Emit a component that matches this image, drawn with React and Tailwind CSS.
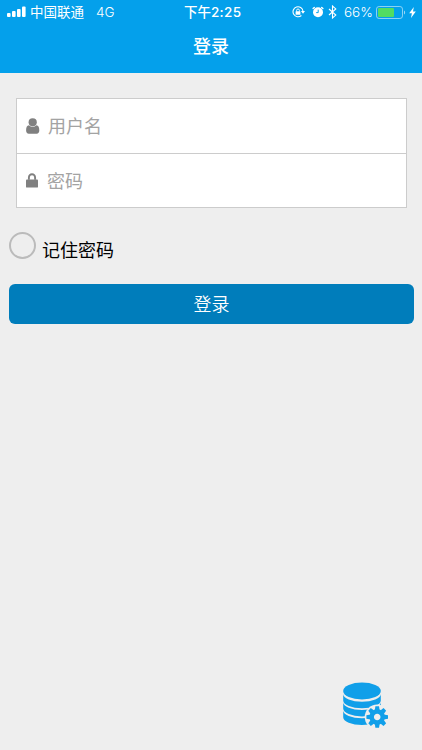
import React, { useState } from 'react';

const toothAngles = [0, 45, 90, 135, 180, 225, 270, 315];

const SignalIcon = () => (
  <svg width="19" height="12" viewBox="0 0 19 12" fill="currentColor">
    <rect x="0" y="7" width="3.6" height="4" rx="1" />
    <rect x="5" y="5" width="3.6" height="6" rx="1" />
    <rect x="10" y="3" width="3.6" height="8" rx="1" />
    <rect x="15" y="0.5" width="3.6" height="10.5" rx="1" />
  </svg>
);

const RotationLockIcon = () => (
  <svg width="13" height="12" viewBox="0 0 13 12" fill="none" stroke="currentColor">
    <path d="M9.4 9.5A5 5 0 1 1 11 5.2" strokeWidth="1.1" />
    <path d="M8.9 5h4.1L11 7.8z" fill="currentColor" stroke="none" />
    <rect x="3.6" y="5.3" width="4.8" height="3.5" rx="0.4" fill="currentColor" stroke="none" />
    <path d="M4.6 5.6V4.4a1.4 1.4 0 0 1 2.8 0v1.2" strokeWidth="0.9" />
  </svg>
);

const AlarmIcon = () => (
  <svg width="12" height="12" viewBox="0 0 12 12" fill="none" stroke="currentColor">
    <circle cx="6" cy="6.2" r="5" fill="currentColor" stroke="none" />
    <path d="M1.1 2.5l1.2-1.1M9.7 1.4l1.2 1.1" strokeWidth="1.4" strokeLinecap="round" />
    <path d="M6.2 3.6v3H4.2" stroke="#04a0eb" strokeWidth="1" />
  </svg>
);

const BluetoothIcon = () => (
  <svg width="9" height="14" viewBox="0 0 9 14" fill="none" stroke="currentColor" strokeWidth="1.1">
    <path d="M1 4l6.8 6.1L4.5 13V1l3.3 2.9L1 10" />
  </svg>
);

const BatteryIcon = () => (
  <svg width="30" height="13" viewBox="0 0 30 13" fill="none">
    <rect x="0.5" y="0.5" width="26" height="12" rx="2.6" stroke="#9bd8f6" strokeWidth="0.9" />
    <rect x="2" y="2" width="16" height="9" rx="1" fill="#51dc62" />
    <path d="M28 4.5c1.5.5 1.5 3.5 0 4z" fill="#9bd8f6" />
  </svg>
);

const ChargingIcon = () => (
  <svg width="7" height="11" viewBox="0 0 7 11" fill="currentColor">
    <path d="M4.8 0L0.2 6.2h2.7L2 11l4.8-6.5H4z" />
  </svg>
);

const UserIcon = () => (
  <svg width="14" height="16" viewBox="0 0 14 16" fill="currentColor">
    <circle cx="6.7" cy="4.3" r="4.1" />
    <path d="M3 7.3c1.2 1.2 2.4 1.7 3.7 1.7s2.5-.5 3.7-1.7c2.2.2 2.9 2.3 2.9 5.2 0 2-1 3.2-2.6 3.2h-8C1.1 15.7.1 14.5.1 12.5.1 9.6.8 7.5 3 7.3z" />
  </svg>
);

const LockIcon = () => (
  <svg width="12" height="15" viewBox="0 0 12 15" fill="none">
    <rect x="0" y="6.4" width="12" height="8.2" rx="0.9" fill="currentColor" />
    <path d="M2.9 6.8V4.5a3.1 3.3 0 0 1 6.2 0v2.3" stroke="currentColor" strokeWidth="1.9" />
  </svg>
);

const DatabaseSettingsIcon = () => (
  <svg width="46" height="47" viewBox="0 0 46 47" fill="#109fe9">
    <ellipse cx="19" cy="10" rx="18.8" ry="8.5" />
    <path d="M.2 13A18.8 7.7 0 0 0 37.8 13V19.4A18.8 7.8 0 0 1 .2 19.4z" />
    <path d="M.2 21.3A18.8 7.7 0 0 0 37.8 21.3V27.6A18.8 7.8 0 0 1 .2 27.6z" />
    <path d="M.2 29.5A18.8 7.7 0 0 0 37.8 29.5V36.2A18.8 7.8 0 0 1 .2 36.2z" />
    <circle cx="34.2" cy="36" r="12.5" fill="#eee" />
    <g transform="translate(34.2 36)">
      {toothAngles.map((angle) => (
        <path key={angle} d="M-2.5 -6.5L-1.8 -10.8H1.8L2.5 -6.5z" transform={`rotate(${angle})`} />
      ))}
      <circle r="5.5" fill="none" stroke="#109fe9" strokeWidth="4.4" />
    </g>
  </svg>
);

const StatusBar = () => (
  <div className="h-6 flex items-center pl-[7px] text-[13.5px] leading-6">
    <div className="w-[177px] flex items-center">
      <SignalIcon />
      <span className="ml-1">中国联通</span>
      <span className="ml-3 font-light">4G</span>
    </div>
    <span className="w-[108px] font-medium text-[13.5px] whitespace-nowrap">
      下午<span className="tracking-[0.3px]">2:25</span>
    </span>
    <RotationLockIcon />
    <span className="ml-[7px]"><AlarmIcon /></span>
    <span className="ml-1"><BluetoothIcon /></span>
    <span className="ml-[7px] w-[32px] text-[13.5px] font-[350]">66%</span>
    <BatteryIcon />
    <span className="ml-[3px]"><ChargingIcon /></span>
  </div>
);

const App = () => {
  const [username, setUsername] = useState('');
  const [password, setPassword] = useState('');
  const [remember, setRemember] = useState(false);

  return (
    <div className="w-full h-[750px] flex flex-col bg-[#eee] font-['Inter','Noto_Sans_CJK_SC',sans-serif]">
      <header className="h-[73px] shrink-0 bg-[#04a0eb] text-white">
        <StatusBar />
        <h1 className="pt-px text-center text-[18px] leading-[44px] font-medium">登录</h1>
      </header>

      <form onSubmit={(e) => e.preventDefault()}>
        <div className="mt-[25px] ml-4 w-[391px] border border-[#ccc] bg-white text-[#808080]">
          <label className="h-[55px] flex items-center pl-[9px] border-b border-[#ccc]">
            <UserIcon />
            <input
              value={username}
              onChange={(e) => setUsername(e.target.value)}
              placeholder="用户名"
              className="ml-2 flex-1 text-[18px] text-black placeholder-[#a3a3a3] outline-none"
            />
          </label>
          <label className="h-[53px] flex items-center pl-[9px]">
            <LockIcon />
            <input
              type="password"
              value={password}
              onChange={(e) => setPassword(e.target.value)}
              placeholder="密码"
              className="ml-[9px] pt-0.5 flex-1 text-[18px] text-black placeholder-[#a3a3a3] outline-none"
            />
          </label>
        </div>

        <label className="mt-6 ml-[9px] h-[27px] flex items-start">
          <input
            type="checkbox"
            checked={remember}
            onChange={(e) => setRemember(e.target.checked)}
            className="appearance-none w-[27px] h-[27px] rounded-full border-2 border-[#bbb] checked:bg-[#04a0eb]"
          />
          <span className="ml-[6px] pt-[5px] text-[18px] leading-[27px] text-black">记住密码</span>
        </label>

        <button
          type="submit"
          className="mt-[25px] ml-[9px] w-[405px] h-10 rounded-[6px] bg-[#007dbb] text-white text-[18px] leading-[41px] font-[350]"
        >
          登录
        </button>
      </form>

      <button className="mt-auto mb-[22px] mr-[33px] self-end">
        <DatabaseSettingsIcon />
      </button>
    </div>
  );
};

export default App;
